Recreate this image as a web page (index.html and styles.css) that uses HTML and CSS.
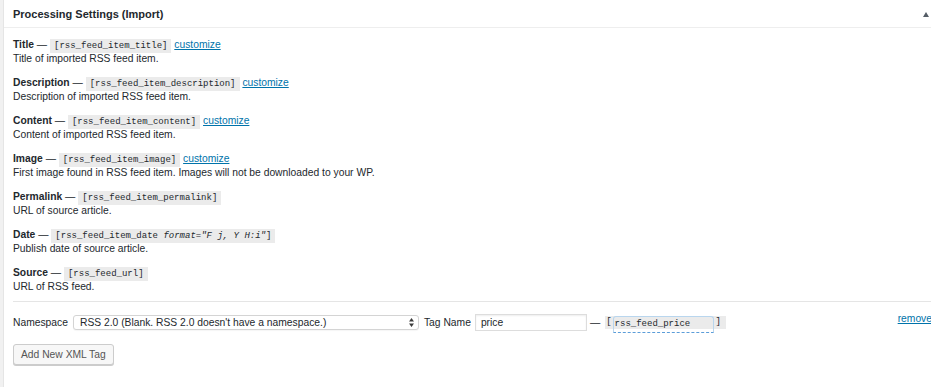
FILE: index.html
```html
<!DOCTYPE html>
<html lang="en">
<head>
    <meta charset="UTF-8">
    <meta name="viewport" content="width=device-width, initial-scale=1.0">
    <title>Processing Settings (Import)</title>
    <link rel="stylesheet" href="styles.css">
</head>
<body>
    <div class="postbox">
        <div class="hndle">
            <h2>Processing Settings (Import)</h2>
            <span class="toggle-arrow"></span>
        </div>
        <div class="inside">
            <div class="fields">
                <div class="field">
                    <div><b>Title</b> — <code>[rss_feed_item_title]</code> <a href="#">customize</a></div>
                    <div>Title of imported RSS feed item.</div>
                </div>
                <div class="field">
                    <div><b>Description</b> — <code>[rss_feed_item_description]</code> <a href="#">customize</a></div>
                    <div>Description of imported RSS feed item.</div>
                </div>
                <div class="field">
                    <div><b>Content</b> — <code>[rss_feed_item_content]</code> <a href="#">customize</a></div>
                    <div>Content of imported RSS feed item.</div>
                </div>
                <div class="field">
                    <div><b>Image</b> — <code>[rss_feed_item_image]</code> <a href="#">customize</a></div>
                    <div>First image found in RSS feed item. Images will not be downloaded to your WP.</div>
                </div>
                <div class="field">
                    <div><b>Permalink</b> — <code>[rss_feed_item_permalink]</code></div>
                    <div>URL of source article.</div>
                </div>
                <div class="field">
                    <div><b>Date</b> — <code>[rss_feed_item_date <i>format="F j, Y H:i"</i>]</code></div>
                    <div>Publish date of source article.</div>
                </div>
                <div class="field">
                    <div><b>Source</b> — <code>[rss_feed_url]</code></div>
                    <div>URL of RSS feed.</div>
                </div>
            </div>

            <div class="xml-tags">
                <div class="tag-row">
                    <label class="tag-label">Namespace</label>
                    <span class="select-wrap">
                        <select class="ns-select">
                            <option>RSS 2.0 (Blank. RSS 2.0 doesn't have a namespace.)</option>
                        </select>
                        <svg class="select-arrows" width="5" height="9" viewBox="0 0 5 9">
                            <path d="M2.5 0 L5 3.5 L0 3.5 Z M2.5 9 L5 5.5 L0 5.5 Z" fill="#3c3c3c"/>
                        </svg>
                    </span>
                    <label class="tag-label name-label">Tag Name</label>
                    <input class="tag-name" type="text" value="price">
                    <span class="dash">—</span>
                    <code class="shortcode">[<input class="shortcode-input" type="text" value="rss_feed_price">]</code>
                    <a href="#" class="remove">remove</a>
                </div>
                <button class="add-tag">Add New XML Tag</button>
            </div>
        </div>
    </div>
</body>
</html>
```

FILE: styles.css
```css
body {
    margin: 0;
    background-color: #f1f1f1;
    color: #23282d;
    font-family: "Liberation Sans", Arial, sans-serif;
    font-size: 10.3px;
    overflow: hidden;
}

.postbox {
    margin: -1px 0 0 3px;
    width: 938px;
    height: 400px;
    background-color: #fff;
    border: 1px solid #e5e5e5;
}

.hndle {
    display: flex;
    align-items: center;
    height: 27px;
    padding: 0 13px 0 9px;
    border-bottom: 1px solid #eeeeee;
}

.hndle h2 {
    flex: 1;
    margin: 1px 0 0;
    font-size: 11px;
    font-weight: bold;
}

.toggle-arrow {
    width: 0;
    height: 0;
    border-left: 3px solid transparent;
    border-right: 3px solid transparent;
    border-bottom: 5px solid #555d66;
    margin-top: 2px;
}

.inside {
    padding: 10px 9px 0;
}

.fields {
    padding-bottom: 7px;
}

.field {
    line-height: 14px;
    margin-bottom: 10px;
}

.field:last-child {
    margin-bottom: 0;
}

.field > div {
    height: 14px;
}

.field b {
    font-weight: bold;
}

code {
    font-family: "Liberation Mono", "Courier New", monospace;
    font-size: 9px;
    line-height: 10px;
    background-color: #ebebeb;
    padding: 2px 4px;
}

a {
    color: #0073aa;
    text-decoration: underline;
}

.xml-tags {
    border-top: 1px solid #e5e5e5;
    padding-top: 12px;
}

.tag-row {
    display: flex;
    align-items: center;
    height: 17px;
}

.tag-label {
    margin-right: 5px;
}

.name-label {
    margin-left: 5px;
    margin-right: 4px;
}

.select-wrap {
    position: relative;
    display: inline-block;
}

.ns-select {
    appearance: none;
    -webkit-appearance: none;
    display: block;
    width: 346px;
    height: 15px;
    margin: 0;
    padding: 0 0 0 6px;
    font-family: inherit;
    font-size: 10.3px;
    color: #23282d;
    background-color: #fff;
    border: 1px solid #d4d4d4;
    border-radius: 3px;
    box-shadow: 0 1px 1px rgba(0, 0, 0, 0.04);
}

.select-arrows {
    position: absolute;
    right: 5px;
    top: 3px;
}

.tag-name {
    box-sizing: border-box;
    width: 112px;
    height: 17px;
    margin: 0;
    padding: 0 5px;
    font-family: inherit;
    font-size: 10.3px;
    color: #23282d;
    border: 1px solid #dddddd;
    box-shadow: inset 0 1px 2px rgba(0, 0, 0, 0.07);
}

.dash {
    margin: 0 5px 0 3px;
}

.shortcode {
    display: inline-flex;
    align-items: center;
    height: 13px;
    padding: 0 5px 0 1px;
    line-height: 13px;
}

.shortcode-input {
    box-sizing: border-box;
    width: 101px;
    height: 17px;
    margin: 3px 2px 0 1px;
    padding: 0 0 0 1px;
    font-family: "Liberation Mono", "Courier New", monospace;
    font-size: 9px;
    color: #23282d;
    background-color: transparent;
    border: 1px solid #b9d6ee;
    border-bottom: 1px dashed #5b9dd9;
    border-radius: 3px 3px 0 0;
    outline: none;
}

.remove {
    margin-left: auto;
    margin-right: 1px;
    align-self: flex-start;
    margin-top: -1px;
}

.add-tag {
    display: block;
    margin-top: 13px;
    height: 21px;
    padding: 0 7px;
    font-family: inherit;
    font-size: 10.3px;
    color: #555;
    background-color: #f7f7f7;
    border: 1px solid #cccccc;
    border-radius: 3px;
    box-shadow: 0 1px 0 #cccccc;
    cursor: pointer;
}
```
